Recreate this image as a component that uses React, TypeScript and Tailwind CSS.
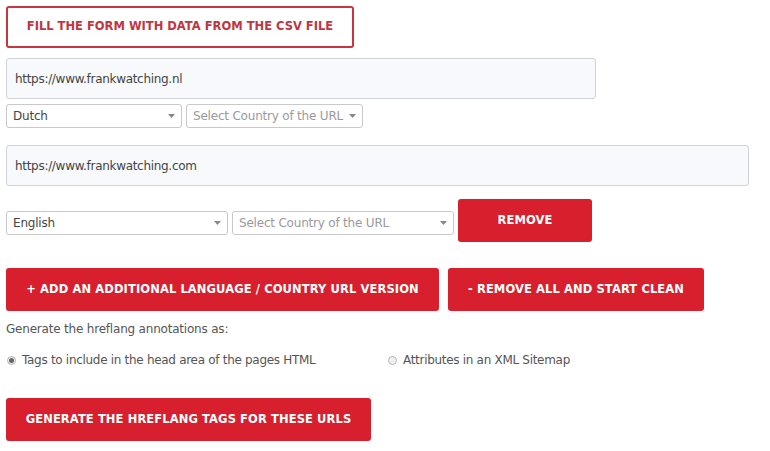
import React from "react";

const font = { fontFamily: '"DejaVu Sans", "Open Sans", sans-serif' };

function Caret() {
  return (
    <svg width="7" height="4" viewBox="0 0 7 4" className="shrink-0">
      <path d="M0 0 L7 0 L3.5 4 Z" fill="#888" />
    </svg>
  );
}

function Select({ w, text, placeholder }: { w: string; text: string; placeholder?: boolean }) {
  return (
    <div
      className={`${w} h-[24px] flex items-center justify-between bg-white border border-[#c9c9c9] rounded-[3px] pl-[6px] pr-[6px] text-[12px] tracking-[-0.2px] ${placeholder ? "text-[#9a9a9a]" : "text-[#444]"}`}
    >
      <span className="whitespace-nowrap">{text}</span>
      <Caret />
    </div>
  );
}

function RedButton({ w, children }: { w: string; children: React.ReactNode }) {
  return (
    <div
      className={`${w} h-[43px] flex items-center justify-center bg-[#d71f2d] rounded-[3px] text-white font-bold text-[11.5px] tracking-[0.1px]`}
    >
      {children}
    </div>
  );
}

function Radio({ checked }: { checked?: boolean }) {
  return (
    <span className="w-[9px] h-[9px] rounded-full border border-[#b5b5b5] bg-[#f0f0f0] flex items-center justify-center shrink-0">
      {checked && <span className="w-[5px] h-[5px] rounded-full bg-[#666]" />}
    </span>
  );
}

export default function App() {
  return (
    <div className="w-[770px] h-[451px] bg-white pl-[6px] pt-[6px] text-[#555]" style={font}>
      <div className="w-[348px] h-[42px] border-2 border-[#c73541] rounded-[3px] flex items-center justify-center text-[#bf3540] font-bold text-[11.5px]">
        FILL THE FORM WITH DATA FROM THE CSV FILE
      </div>

      <div className="mt-[10px] w-[590px] h-[41px] bg-[#f7f9fc] border border-[#cfd3d8] rounded-[3px] flex items-center pl-[8px] text-[12px] tracking-[-0.3px] text-[#444]">
        https://www.frankwatching.nl
      </div>

      <div className="mt-[5px] flex gap-[4px]">
        <Select w="w-[176px]" text="Dutch" />
        <Select w="w-[177px]" text="Select Country of the URL" placeholder />
      </div>

      <div className="mt-[17px] w-[743px] h-[41px] bg-[#f7f9fc] border border-[#cfd3d8] rounded-[3px] flex items-center pl-[8px] text-[12px] tracking-[-0.3px] text-[#444]">
        https://www.frankwatching.com
      </div>

      <div className="mt-[13px] flex gap-[4px] items-start">
        <div className="mt-[12px] flex gap-[4px]">
          <Select w="w-[222px]" text="English" />
          <Select w="w-[222px]" text="Select Country of the URL" placeholder />
        </div>
        <RedButton w="w-[134px]">REMOVE</RedButton>
      </div>

      <div className="mt-[26px] flex gap-[9px]">
        <RedButton w="w-[433px]">+ ADD AN ADDITIONAL LANGUAGE / COUNTRY URL VERSION</RedButton>
        <RedButton w="w-[256px]">- REMOVE ALL AND START CLEAN</RedButton>
      </div>

      <div className="mt-[9px] text-[12px] tracking-[-0.2px] text-[#555]">Generate the hreflang annotations as:</div>

      <div className="mt-[13px] flex items-center text-[12px] tracking-[-0.3px] text-[#555]">
        <div className="w-[382px] flex items-center gap-[6px] pl-[1px]">
          <Radio checked />
          <span>Tags to include in the head area of the pages HTML</span>
        </div>
        <div className="flex items-center gap-[6px]">
          <Radio />
          <span>Attributes in an XML Sitemap</span>
        </div>
      </div>

      <div className="mt-[29px]">
        <RedButton w="w-[365px]">GENERATE THE HREFLANG TAGS FOR THESE URLS</RedButton>
      </div>
    </div>
  );
}
